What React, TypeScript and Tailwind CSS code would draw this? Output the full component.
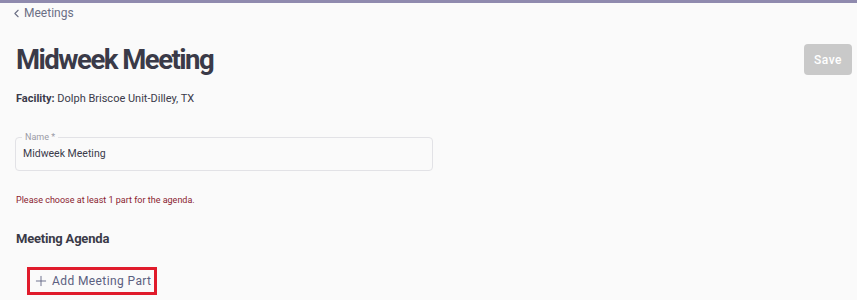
import { ChevronLeft, Plus } from "lucide-react";

export default function App() {
  return (
    <div
      className="min-h-[300px] w-full bg-[#fafafa] text-[#3b3b4a]"
      style={{ fontFamily: "Roboto, 'Noto Sans', sans-serif" }}
    >
      <div className="h-[3px] w-full bg-[#8f8aae]" />
      <div className="px-4">
        <a className="-ml-[6px] flex items-center gap-[1px] pt-[1px] text-[12px] text-[#6b6f85]">
          <ChevronLeft size={13} strokeWidth={2} />
          Meetings
        </a>

        <div className="mt-[21px] flex items-start justify-between">
          <h1 className="text-[27.5px] font-bold leading-[34px] tracking-[-1.5px] text-[#3a3a48]">
            Midweek Meeting
          </h1>
          <button className="mr-[-11px] mt-[1px] h-[31px] w-[48px] rounded-[4px] bg-[#c9c9c9] text-[12px] font-medium tracking-[0.5px] text-white">
            Save
          </button>
        </div>

        <p className="mt-[14px] text-[11px] text-[#3b3b4a]">
          <span className="font-bold">Facility:</span> Dolph Briscoe Unit-Dilley, TX
        </p>

        <div className="relative mt-[29px] h-[34px] w-[418px] rounded-[4px] border border-[#e2e2e6] bg-[#fafafa] -ml-[1px]">
          <span className="absolute -top-[7px] left-[6px] bg-[#fafafa] px-[3px] text-[9px] leading-[12px] text-[#9a9aa6]">
            Name *
          </span>
          <div className="flex h-full items-center px-[7px] text-[10.5px] text-[#3b3b4a]">
            Midweek Meeting
          </div>
        </div>

        <p className="mt-[23px] text-[9px] text-[#8a1c30]">
          Please choose at least 1 part for the agenda.
        </p>

        <h2 className="mt-[22px] text-[13px] font-bold tracking-[-0.2px] text-[#3a3a48]">Meeting Agenda</h2>

        <div className="ml-[11px] mt-[18px] inline-flex h-[28px] items-center gap-[3px] border-[3px] border-[#e01b2b] px-[3px] text-[12px] tracking-[0.4px] text-[#5b6080]">
          <Plus size={16} strokeWidth={1.3} />
          Add Meeting Part
        </div>
      </div>
    </div>
  );
}
